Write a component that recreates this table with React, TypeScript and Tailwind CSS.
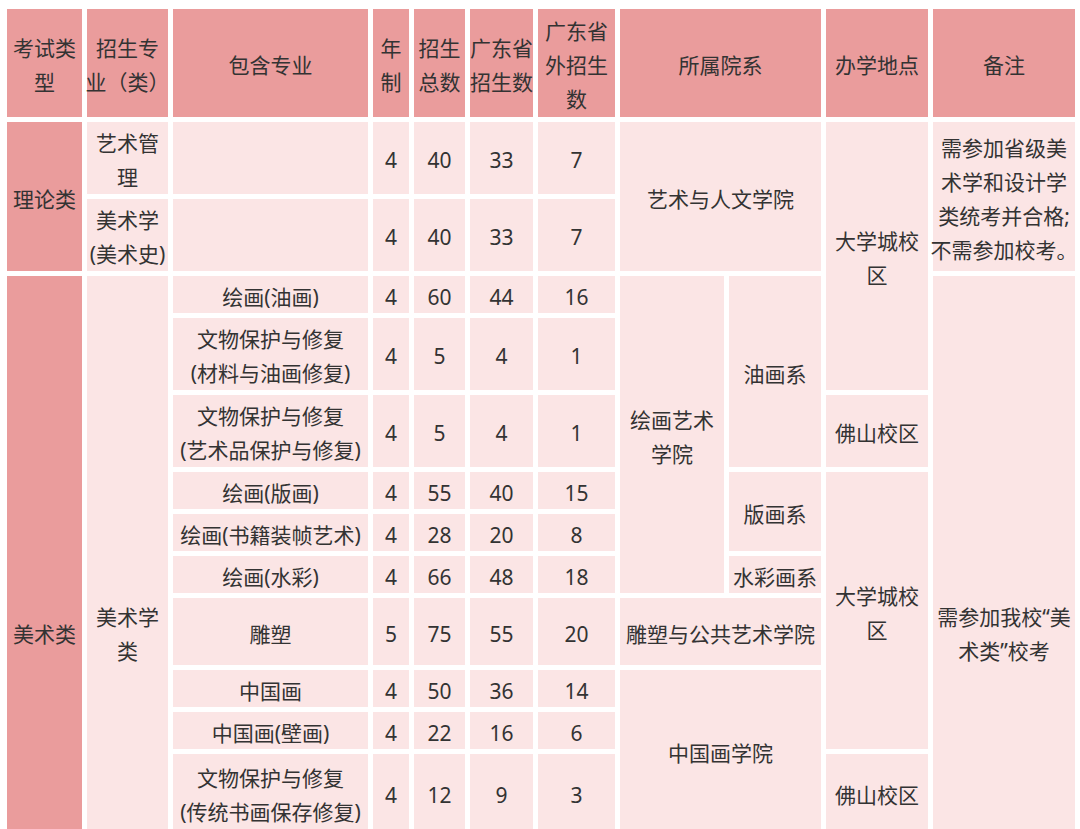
import React from 'react'

// 招生专业表：表头与首列用深粉色，其余单元格浅粉色
const head = 'bg-[#ea9c9c]'
const body = 'bg-[#fbe5e5]'

function Cell({ children, className = '' }: { children?: React.ReactNode; className?: string }) {
  return (
    <div className={`flex items-center justify-center text-center whitespace-nowrap pt-1 ${className}`}>
      <span>{children}</span>
    </div>
  )
}

const lines = (...ls: string[]) =>
  ls.map((l, i) => (
    <React.Fragment key={i}>
      {i > 0 && <br />}
      {l}
    </React.Fragment>
  ))

interface MajorRow {
  name: React.ReactNode
  years: number
  total: number
  inGd: number
  outGd: number
}

const num = (r: MajorRow) => (
  <>
    <Cell className={body}>{r.name}</Cell>
    <Cell className={body}>{r.years}</Cell>
    <Cell className={body}>{r.total}</Cell>
    <Cell className={body}>{r.inGd}</Cell>
    <Cell className={body}>{r.outGd}</Cell>
  </>
)

export default function App() {
  return (
    <div className="bg-white pl-[7px] pt-[9px] pb-2 font-['Noto_Sans','Noto_Sans_CJK_SC',sans-serif] text-[21px] leading-[34px] text-[#333]">
      <div className="grid gap-[5px] grid-cols-[75px_81px_195px_36px_51px_63px_77px_104px_92px_102px_142px] grid-rows-[108px_72px_72px_37px_72px_72px_37px_37px_37px_67px_37px_37px_77px_152px]">
        {/* 表头 */}
        <Cell className={head}>{lines('考试类', '型')}</Cell>
        <Cell className={head}>{lines('招生专', '业（类）')}</Cell>
        <Cell className={head}>包含专业</Cell>
        <Cell className={head}>{lines('年', '制')}</Cell>
        <Cell className={head}>{lines('招生', '总数')}</Cell>
        <Cell className={head}>{lines('广东省', '招生数')}</Cell>
        <Cell className={head}>{lines('广东省', '外招生', '数')}</Cell>
        <Cell className={`${head} col-span-2`}>所属院系</Cell>
        <Cell className={head}>办学地点</Cell>
        <Cell className={head}>备注</Cell>

        {/* 理论类 */}
        <Cell className={`${head} row-span-2`}>理论类</Cell>
        <Cell className={body}>{lines('艺术管', '理')}</Cell>
        <Cell className={body} />
        <Cell className={body}>4</Cell>
        <Cell className={body}>40</Cell>
        <Cell className={body}>33</Cell>
        <Cell className={body}>7</Cell>
        <Cell className={`${body} col-span-2 row-span-2`}>艺术与人文学院</Cell>
        <Cell className={`${body} row-span-4`}>{lines('大学城校', '区')}</Cell>
        <Cell className={`${body} row-span-2`}>{lines('需参加省级美', '术学和设计学', '类统考并合格;', '不需参加校考。')}</Cell>

        <Cell className={body}>{lines('美术学', '(美术史)')}</Cell>
        <Cell className={body} />
        <Cell className={body}>4</Cell>
        <Cell className={body}>40</Cell>
        <Cell className={body}>33</Cell>
        <Cell className={body}>7</Cell>

        {/* 美术类 */}
        <Cell className={`${head} row-span-11`}>美术类</Cell>
        <Cell className={`${body} row-span-11`}>{lines('美术学', '类')}</Cell>
        {num({ name: '绘画(油画)', years: 4, total: 60, inGd: 44, outGd: 16 })}
        <Cell className={`${body} row-span-6`}>{lines('绘画艺术', '学院')}</Cell>
        <Cell className={`${body} row-span-3`}>油画系</Cell>
        <Cell className={`${body} row-span-11`}>{lines('需参加我校“美', '术类”校考')}</Cell>

        {num({ name: lines('文物保护与修复', '(材料与油画修复)'), years: 4, total: 5, inGd: 4, outGd: 1 })}

        {num({ name: lines('文物保护与修复', '(艺术品保护与修复)'), years: 4, total: 5, inGd: 4, outGd: 1 })}
        <Cell className={body}>佛山校区</Cell>

        {num({ name: '绘画(版画)', years: 4, total: 55, inGd: 40, outGd: 15 })}
        <Cell className={`${body} row-span-2`}>版画系</Cell>
        <Cell className={`${body} row-span-6`}>{lines('大学城校', '区')}</Cell>

        {num({ name: '绘画(书籍装帧艺术)', years: 4, total: 28, inGd: 20, outGd: 8 })}

        {num({ name: '绘画(水彩)', years: 4, total: 66, inGd: 48, outGd: 18 })}
        <Cell className={body}>水彩画系</Cell>

        {num({ name: '雕塑', years: 5, total: 75, inGd: 55, outGd: 20 })}
        <Cell className={`${body} col-span-2`}>雕塑与公共艺术学院</Cell>

        {num({ name: '中国画', years: 4, total: 50, inGd: 36, outGd: 14 })}
        <Cell className={`${body} col-span-2 row-span-3`}>中国画学院</Cell>

        {num({ name: lines('中国画(壁画)'), years: 4, total: 22, inGd: 16, outGd: 6 })}

        {num({ name: lines('文物保护与修复', '(传统书画保存修复)'), years: 4, total: 12, inGd: 9, outGd: 3 })}
        <Cell className={body}>佛山校区</Cell>

        {/* 下一行（截图之外） */}
        <Cell className={body} />
        <Cell className={body} />
        <Cell className={body} />
        <Cell className={body} />
        <Cell className={body} />
        <Cell className={`${body} col-span-2`} />
        <Cell className={body} />
      </div>
    </div>
  )
}
